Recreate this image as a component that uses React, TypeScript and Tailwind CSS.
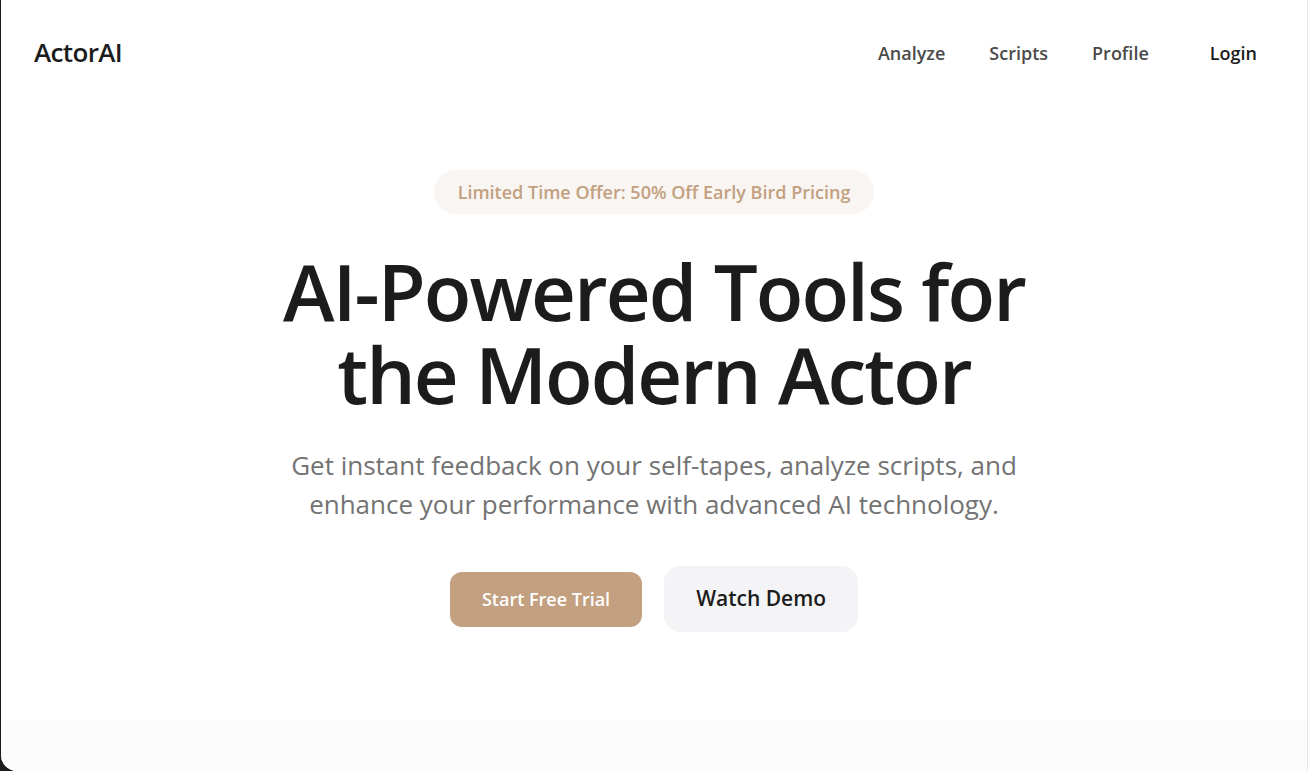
export default function App() {
  return (
    <div className="min-h-screen bg-[#1c1c1e] pl-px font-['Open_Sans','Noto_Sans',sans-serif]">
      <div className="flex min-h-screen flex-col overflow-hidden rounded-bl-2xl border-r border-[#e9e9eb] bg-white text-[#1c1c1c]">
        <header className="flex h-[105px] items-center justify-between px-[33px]">
          <a href="#" className="text-[26px] font-semibold tracking-tight">ActorAI</a>
          <nav className="flex items-center gap-11 text-lg font-semibold text-[#4a4a4a]">
            <a href="#analyze">Analyze</a>
            <a href="#scripts">Scripts</a>
            <a href="#profile">Profile</a>
            <button type="button" className="px-[17px] text-[#1c1c1c]">Login</button>
          </nav>
        </header>
        <main className="flex flex-col items-center pt-[65px] pb-22 text-center">
          <p className="flex h-11 items-center rounded-full bg-[#f9f5f2] px-6 text-lg font-semibold text-[#c2a080]">
            Limited Time Offer: 50% Off Early Bird Pricing
          </p>
          <h1 className="mt-9 text-[78px] leading-[83px] font-semibold tracking-tight">
            AI-Powered Tools for<br />the Modern Actor
          </h1>
          <p className="mt-[30px] text-[26px] leading-[39px] text-[#737373]">
            Get instant feedback on your self-tapes, analyze scripts, and<br />
            enhance your performance with advanced AI technology.
          </p>
          <div className="mt-[42px] flex items-center gap-[22px]">
            <button type="button" className="h-[55px] rounded-xl bg-[#c2a080] px-8 text-lg font-semibold text-white">Start Free Trial</button>
            <button type="button" className="h-[66px] rounded-2xl bg-[#f4f4f6] px-8 text-[21px] font-semibold">Watch Demo</button>
          </div>
        </main>
        <section className="grow bg-[#fcfcfc]" />
      </div>
    </div>
  );
}
